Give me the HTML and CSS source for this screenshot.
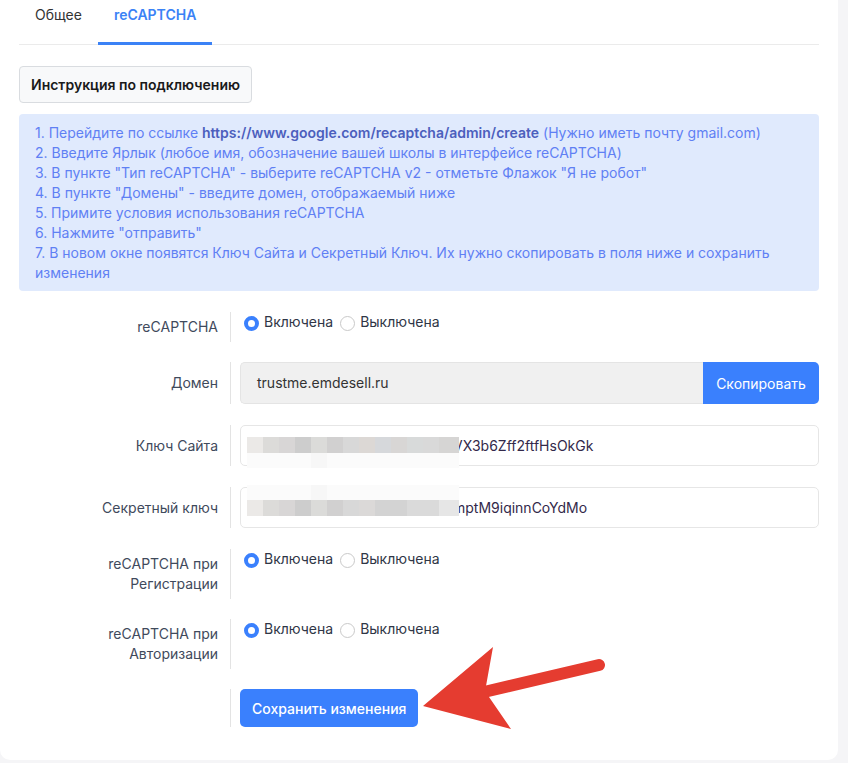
FILE: index.html
```html
<!DOCTYPE html>
<html lang="ru">
<head>
<meta charset="utf-8">
<title>reCAPTCHA</title>
<link rel="stylesheet" href="styles.css">
</head>
<body>
<div class="card">
  <div class="tabs">
    <div class="tab">Общее</div>
    <div class="tab active">reCAPTCHA</div>
  </div>

  <button class="btn-light">Инструкция по подключению</button>

  <div class="info">
    <div>1. Перейдите по ссылке <b>https://www.google.com/recaptcha/admin/create</b> (Нужно иметь почту gmail.com)</div>
    <div>2. Введите Ярлык (любое имя, обозначение вашей школы в интерфейсе reCAPTCHA)</div>
    <div>3. В пункте "Тип reCAPTCHA" - выберите reCAPTCHA v2 - отметьте Флажок "Я не робот"</div>
    <div>4. В пункте "Домены" - введите домен, отображаемый ниже</div>
    <div>5. Примите условия использования reCAPTCHA</div>
    <div>6. Нажмите "отправить"</div>
    <div>7. В новом окне появятся Ключ Сайта и Секретный Ключ. Их нужно скопировать в поля ниже и сохранить изменения</div>
  </div>

  <div class="form">
    <div class="row">
      <div class="lbl lbl-top">reCAPTCHA</div>
      <div class="ctl">
        <div class="radios">
          <span class="radio checked"></span><span class="rtext">Включена</span>
          <span class="radio"></span><span class="rtext">Выключена</span>
        </div>
      </div>
    </div>

    <div class="row row-wide">
      <div class="lbl lbl-mid">Домен</div>
      <div class="ctl">
        <div class="group">
          <div class="input input-gray">trustme.emdesell.ru</div>
          <button class="btn-copy">Скопировать</button>
        </div>
      </div>
    </div>

    <div class="row row-wide">
      <div class="lbl lbl-mid">Ключ Сайта</div>
      <div class="ctl">
        <div class="input input-key">
          <div class="mosaic mosaic-a"><div class="tiles tiles-a"></div><div class="haze"></div></div>
          <span class="keytext">VX3b6Zff2ftfHsOkGk</span>
        </div>
      </div>
    </div>

    <div class="row row-wide">
      <div class="lbl lbl-mid">Секретный ключ</div>
      <div class="ctl">
        <div class="input input-key">
          <div class="mosaic mosaic-b"><div class="haze"></div><div class="tiles tiles-b"></div></div>
          <span class="keytext">mptM9iqinnCoYdMo</span>
        </div>
      </div>
    </div>

    <div class="row">
      <div class="lbl lbl-top">reCAPTCHA при<br>Регистрации</div>
      <div class="ctl">
        <div class="radios">
          <span class="radio checked"></span><span class="rtext">Включена</span>
          <span class="radio"></span><span class="rtext">Выключена</span>
        </div>
      </div>
    </div>

    <div class="row">
      <div class="lbl lbl-top">reCAPTCHA при<br>Авторизации</div>
      <div class="ctl">
        <div class="radios">
          <span class="radio checked"></span><span class="rtext">Включена</span>
          <span class="radio"></span><span class="rtext">Выключена</span>
        </div>
      </div>
    </div>

    <div class="row">
      <div class="lbl lbl-mid"></div>
      <div class="ctl">
        <button class="btn-save">Сохранить изменения</button>
      </div>
    </div>
  </div>
</div>

<svg class="arrow" width="848" height="763" viewBox="0 0 848 763" xmlns="http://www.w3.org/2000/svg">
  <line x1="484" y1="692" x2="599" y2="665" stroke="#e53c30" stroke-width="12" stroke-linecap="round"/>
  <polygon points="423,706 493,647 486,686 489,697 511,729" fill="#e53c30"/>
</svg>
</body>
</html>
```

FILE: styles.css
```css
* { box-sizing: border-box; }

html, body {
  margin: 0;
  padding: 0;
}

body {
  background: #f5f5f7;
  font-family: Inter, "Noto Sans", sans-serif;
  font-size: 14px;
  line-height: 20px;
  color: #333;
  width: 848px;
  height: 763px;
  overflow: hidden;
  position: relative;
}

.card {
  width: 838px;
  height: 760px;
  background: #fff;
  border-radius: 0 0 10px 10px;
  padding: 0 19px;
}

.tabs {
  display: flex;
  border-bottom: 1px solid #ebebeb;
  height: 45px;
}

.tab {
  padding: 5px 16px 0;
  color: #333;
}

.tab.active {
  color: #3b82f6;
  font-weight: 600;
  border-bottom: 3px solid #3b82f6;
  margin-bottom: -1px;
}

.btn-light {
  margin-top: 21px;
  height: 37px;
  padding: 0 11px;
  background: #f8f9fa;
  border: 1px solid #d9dce0;
  border-radius: 4px;
  font-family: inherit;
  font-size: 14px;
  font-weight: 600;
  color: #1a1a1a;
  display: block;
}

.info {
  margin-top: 11px;
  background: #e0eafd;
  border-radius: 4px;
  padding: 9px 16px 8px;
  color: #5f80f4;
}

.info b {
  color: #4c5fbd;
  font-weight: 600;
}

.form {
  margin-top: 21px;
}

.row {
  display: flex;
  margin-bottom: 20px;
}

.row-wide {
  margin-bottom: 21px;
}

.lbl {
  width: 212px;
  flex: none;
  border-right: 1px solid #e3e3e3;
  padding-right: 12px;
  text-align: right;
  color: #3f4a5c;
}

.lbl-top {
  padding-top: 5px;
  padding-bottom: 5px;
}

.lbl-mid {
  display: flex;
  align-items: center;
  justify-content: flex-end;
}

.ctl {
  flex: 1;
  padding-left: 9px;
}

.radios {
  display: flex;
  align-items: center;
  height: 20px;
  padding-left: 4px;
  color: #2f3646;
}

.radio {
  width: 15px;
  height: 15px;
  border-radius: 50%;
  border: 1px solid #c9c9c9;
  background: #fff;
  flex: none;
  margin-top: 2px;
}

.radio.checked {
  border: 4px solid #3a80fd;
  background: #fff;
}

.rtext {
  margin-left: 5px;
  margin-right: 7px;
}

.group {
  display: flex;
  height: 42px;
}

.input {
  flex: 1;
  height: 42px;
  border: 1px solid #e6e6e6;
  border-radius: 5px;
  padding: 0 16px;
  display: flex;
  align-items: center;
  font-size: 14px;
  color: #333;
}

.input-gray {
  background: #f0f0f0;
  border-color: #e4e4e4;
  border-radius: 5px 0 0 5px;
  border-right: none;
}

.btn-copy {
  flex: none;
  width: 116px;
  height: 42px;
  border: none;
  background: #3a80fd;
  color: #fff;
  font-family: inherit;
  font-size: 14px;
  border-radius: 0 5px 5px 0;
}

.input-key {
  height: 41px;
  padding-left: 6px;
  position: relative;
  color: #33294a;
}

.mosaic {
  width: 212px;
  flex: none;
  position: relative;
  z-index: 1;
}

.mosaic-a { margin-top: 14px; }
.mosaic-b { margin-top: -15px; }

.tiles {
  height: 16px;
}

.tiles-a {
  background: linear-gradient(90deg,
    #ebe9e7 0 16px, #dcdbd9 16px 32px, #d8d6d6 32px 48px, #cdcdcd 48px 64px,
    #dbdbd9 64px 80px, #d1d0d0 80px 96px, #d8d8d8 96px 112px, #dcd8d5 112px 128px,
    #d6d8db 128px 144px, #d8d6d5 144px 160px, #d8dada 160px 176px, #d9d9d9 176px 192px,
    #d6d5d4 192px 212px);
}

.tiles-b {
  background: linear-gradient(90deg,
    #ebe9e7 0 16px, #dcdbd9 16px 32px, #d8d6d6 32px 48px, #cdcdcd 48px 64px,
    #dbdbd9 64px 80px, #d1d0d0 80px 96px, #d8d8d8 96px 112px, #dbd9d8 112px 128px,
    #d3d3d3 128px 160px, #dadada 160px 192px, #e6e6e6 192px 212px);
}

.haze {
  height: 15px;
  background: linear-gradient(90deg, #fbfbfb 0 64px, #f7f7f7 64px 80px, #fbfbfb 80px 212px);
}

.keytext {
  margin-left: -6px;
  font-size: 14px;
}

.btn-save {
  height: 38px;
  padding: 0 12px;
  border: none;
  border-radius: 5px;
  background: #3a80fd;
  color: #fff;
  font-family: inherit;
  font-size: 14px;
  font-weight: 500;
}

.arrow {
  position: absolute;
  left: 0;
  top: 0;
  pointer-events: none;
}
```
